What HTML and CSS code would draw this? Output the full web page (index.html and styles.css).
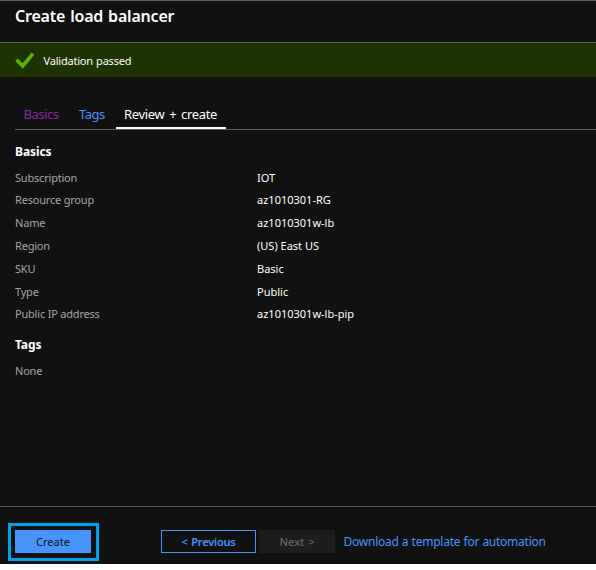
FILE: index.html
```html
<!DOCTYPE html>
<html lang="en">
<head>
<meta charset="utf-8">
<title>Create load balancer</title>
<link rel="stylesheet" href="styles.css">
</head>
<body>
<div class="blade">
  <header class="header"><h1 class="title">Create load balancer</h1></header>
  <div class="status">
    <svg class="check" width="20" height="18" viewBox="0 0 20 18"><path d="M1.5 8.8 L7.7 15 L18 2.6" fill="none" stroke="#5db300" stroke-width="3.6"/></svg>
    <span class="status-text">Validation passed</span>
  </div>
  <nav class="tabs">
    <a class="tab visited">Basics</a>
    <a class="tab link">Tags</a>
    <a class="tab active">Review + create</a>
  </nav>
  <main class="content">
    <h2 class="section">Basics</h2>
    <dl class="rows">
      <dt>Subscription</dt><dd>IOT</dd>
      <dt>Resource group</dt><dd>az1010301-RG</dd>
      <dt>Name</dt><dd>az1010301w-lb</dd>
      <dt>Region</dt><dd>(US) East US</dd>
      <dt>SKU</dt><dd>Basic</dd>
      <dt>Type</dt><dd>Public</dd>
      <dt>Public IP address</dt><dd>az1010301w-lb-pip</dd>
    </dl>
    <h2 class="section tags-heading">Tags</h2>
    <p class="none">None</p>
  </main>
  <footer class="footer">
    <div class="highlight"><button class="btn create">Create</button></div>
    <button class="btn previous">&lt; Previous</button>
    <button class="btn next" disabled>Next &gt;</button>
    <a class="download">Download a template for automation</a>
  </footer>
</div>
</body>
</html>
```
FILE: styles.css
```css
* { box-sizing: border-box; }
body { margin: 0; background: #fff; font-family: "Noto Sans", sans-serif; font-size: 11px; color: #fff; }
h1, h2, p, dl, dd { margin: 0; }
.blade { display: flex; flex-direction: column; width: 596px; height: 564px; background: #111; border-top: 1px solid #605e5c; white-space: nowrap; overflow: hidden; }
.header { height: 42px; padding: 4px 15px 0; border-bottom: 1px solid #605e5c; }
.title { font-size: 16px; line-height: 22px; font-weight: 600; letter-spacing: -0.2px; word-spacing: 1px; }
.status { display: flex; align-items: center; height: 34px; padding-left: 15px; background: #1d3302; }
.check { margin-right: 8.5px; }
.status-text { font-size: 11px; letter-spacing: -0.2px; word-spacing: 0.5px; }
.tabs { display: flex; height: 53px; margin-left: 15px; border-bottom: 1px solid #605e5c; align-items: flex-end; }
.tab { height: 28px; padding: 0 8px; font-size: 13px; line-height: 26px; }
.visited { width: 55px; padding-left: 8.5px; color: #8429a0; letter-spacing: -0.45px; }
.link { width: 46px; padding-left: 9px; color: #4894fe; letter-spacing: -0.5px; }
.active { width: 110px; border-bottom: 2px solid #fff; letter-spacing: -0.35px; word-spacing: 1.8px; }
.content { flex: 1; padding: 14px 15px 0; }
.section { font-size: 12px; line-height: 16px; font-weight: 700; letter-spacing: -0.1px; }
.rows { display: grid; grid-template-columns: 242px 1fr; grid-auto-rows: 22.77px; margin-top: 6.7px; line-height: 22px; }
dt, .none { color: #a5a5a5; letter-spacing: -0.2px; }
.tags-heading { margin-top: 11px; }
.none { margin-top: 7px; line-height: 22px; }
.footer { display: flex; align-items: flex-start; height: 58px; padding: 16px 0 0 8px; border-top: 1px solid #605e5c; }
.highlight { width: 91px; height: 38px; border: 3px solid #00a2ed; padding: 4px; margin-right: 62px; }
.btn { display: block; height: 23px; padding: 0; border: 0; font: 11px/22px "Noto Sans", sans-serif; }
.create { width: 76px; background: #4894fe; color: #111; }
.previous { width: 95px; margin: 7px 3px 0 0; border: 1px solid #4894fe; background: #111; color: #4894fe; font-weight: 600; line-height: 20px; letter-spacing: -0.2px; word-spacing: 1px; }
.next { width: 76px; margin-top: 7px; background: #1d1d1d; color: #666; font-weight: 500; word-spacing: 1px; }
.download { margin: 7px 0 0 8.5px; font-size: 12px; line-height: 23px; color: #4894fe; letter-spacing: -0.25px; word-spacing: 0.4px; }
```
